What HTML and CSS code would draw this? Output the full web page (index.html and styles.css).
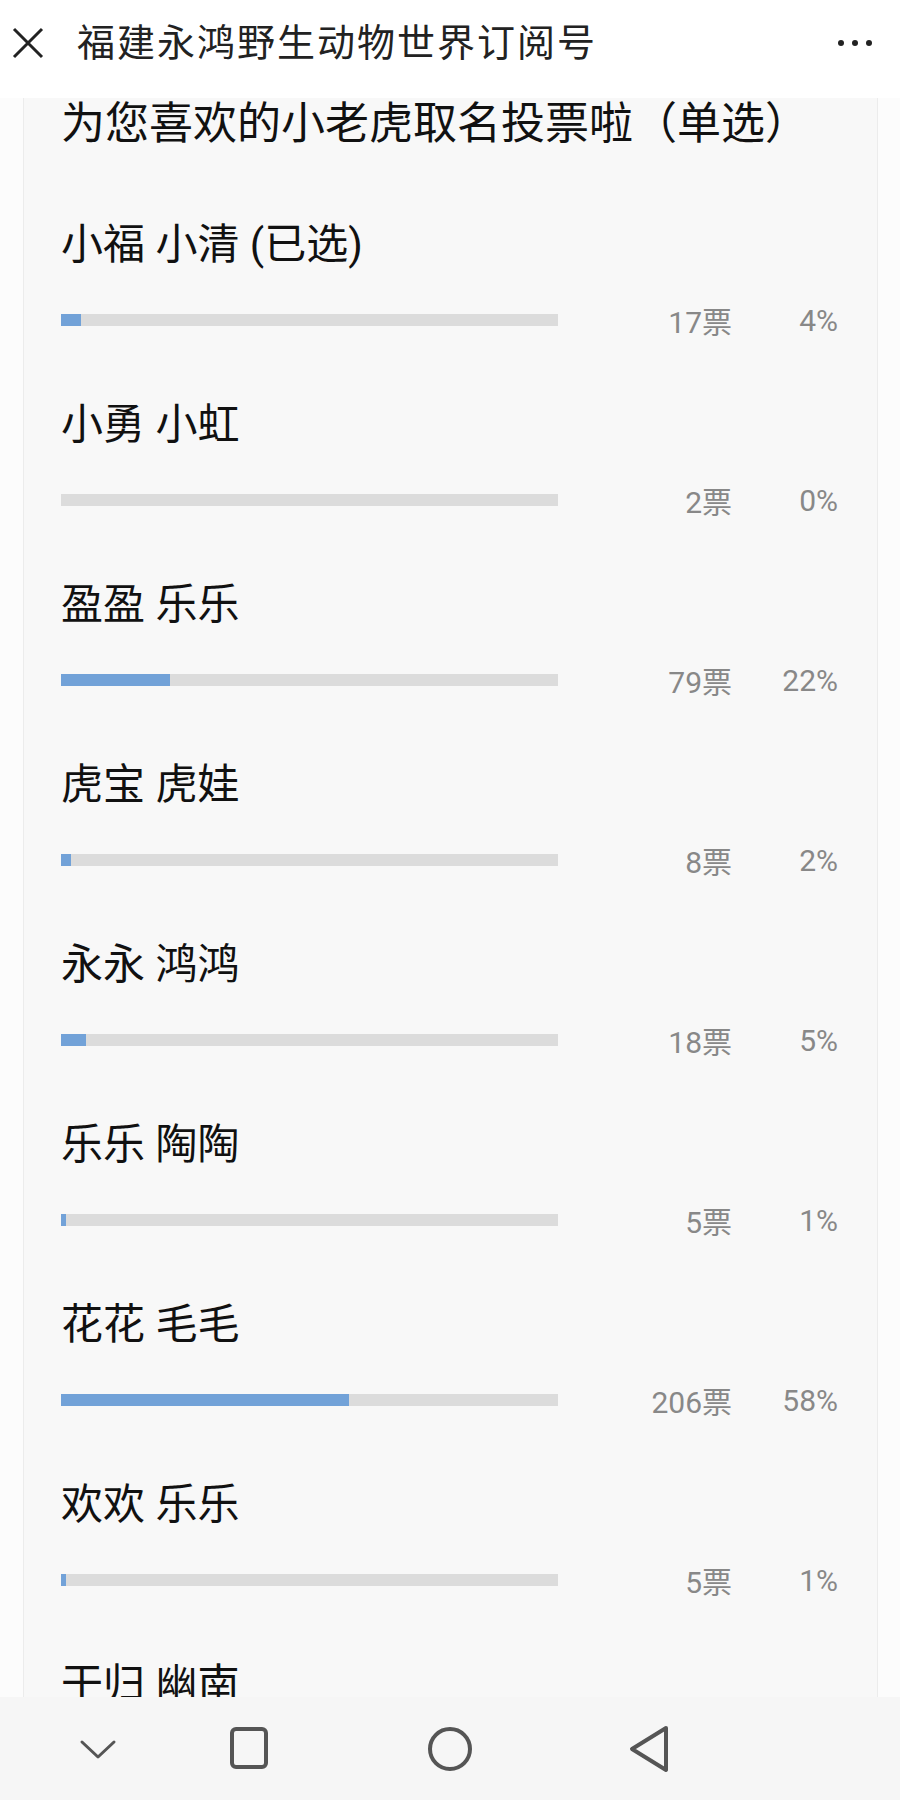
FILE: index.html
```html
<!DOCTYPE html>
<html lang="zh-CN">
<head>
    <meta charset="utf-8">
    <title>福建永鸿野生动物世界订阅号</title>
    <link rel="stylesheet" href="styles.css">
</head>
<body>
    <header class="topbar">
        <span class="close-btn">
            <svg width="32" height="32" viewBox="0 0 32 32"><path d="M2 2 L30 30 M30 2 L2 30" /></svg>
        </span>
        <h1 class="title">福建永鸿野生动物世界订阅号</h1>
        <span class="more-btn"><i></i><i></i><i></i></span>
    </header>

    <main class="vote-card">
        <h2 class="vote-title">为您喜欢的小老虎取名投票啦（单选）</h2>
        <ul class="options">
            <li class="option">
                <div class="option-name">小福 小清 (已选)</div>
                <div class="option-stat">
                    <div class="bar"><div class="bar-fill" style="width: 4%"></div></div>
                    <span class="count">17票</span>
                    <span class="percent">4%</span>
                </div>
            </li>
            <li class="option">
                <div class="option-name">小勇 小虹</div>
                <div class="option-stat">
                    <div class="bar"><div class="bar-fill" style="width: 0%"></div></div>
                    <span class="count">2票</span>
                    <span class="percent">0%</span>
                </div>
            </li>
            <li class="option">
                <div class="option-name">盈盈 乐乐</div>
                <div class="option-stat">
                    <div class="bar"><div class="bar-fill" style="width: 22%"></div></div>
                    <span class="count">79票</span>
                    <span class="percent">22%</span>
                </div>
            </li>
            <li class="option">
                <div class="option-name">虎宝 虎娃</div>
                <div class="option-stat">
                    <div class="bar"><div class="bar-fill" style="width: 2%"></div></div>
                    <span class="count">8票</span>
                    <span class="percent">2%</span>
                </div>
            </li>
            <li class="option">
                <div class="option-name">永永 鸿鸿</div>
                <div class="option-stat">
                    <div class="bar"><div class="bar-fill" style="width: 5%"></div></div>
                    <span class="count">18票</span>
                    <span class="percent">5%</span>
                </div>
            </li>
            <li class="option">
                <div class="option-name">乐乐 陶陶</div>
                <div class="option-stat">
                    <div class="bar"><div class="bar-fill" style="width: 1%"></div></div>
                    <span class="count">5票</span>
                    <span class="percent">1%</span>
                </div>
            </li>
            <li class="option">
                <div class="option-name">花花 毛毛</div>
                <div class="option-stat">
                    <div class="bar"><div class="bar-fill" style="width: 58%"></div></div>
                    <span class="count">206票</span>
                    <span class="percent">58%</span>
                </div>
            </li>
            <li class="option">
                <div class="option-name">欢欢 乐乐</div>
                <div class="option-stat">
                    <div class="bar"><div class="bar-fill" style="width: 1%"></div></div>
                    <span class="count">5票</span>
                    <span class="percent">1%</span>
                </div>
            </li>
            <li class="option">
                <div class="option-name">干归 幽南</div>
                <div class="option-stat">
                    <div class="bar"><div class="bar-fill" style="width: 4%"></div></div>
                    <span class="count">15票</span>
                    <span class="percent">4%</span>
                </div>
            </li>
        </ul>
    </main>

    <nav class="sysbar">
        <span class="sys-btn hide-btn">
            <svg width="40" height="24" viewBox="0 0 40 24"><path d="M4 5 L20 20 L36 5" /></svg>
        </span>
        <span class="sys-btn">
            <svg width="44" height="44" viewBox="0 0 44 44"><rect x="4" y="2" width="34" height="38" rx="4" /></svg>
        </span>
        <span class="sys-btn">
            <svg width="48" height="48" viewBox="0 0 48 48"><circle cx="24" cy="24" r="20" /></svg>
        </span>
        <span class="sys-btn">
            <svg width="44" height="48" viewBox="0 0 44 48"><path d="M38 3 L4 24 L38 45 Z" /></svg>
        </span>
    </nav>
</body>
</html>
```

FILE: styles.css
```css
* {
    margin: 0;
    padding: 0;
    box-sizing: border-box;
}
body {
    font-family: Roboto, "Noto Sans CJK SC", sans-serif;
    background: #fcfcfc;
    color: #111;
    overflow: hidden;
}
.topbar {
    display: flex;
    align-items: center;
    height: 98px;
    padding: 0 28px 12px 12px;
    background: #fff;
}
.close-btn {
    display: flex;
    width: 32px;
    height: 32px;
}
.close-btn svg path {
    stroke: #222;
    stroke-width: 3;
    fill: none;
}
.title {
    flex: 1;
    margin-left: 33px;
    font-size: 38px;
    font-weight: normal;
    letter-spacing: 2px;
    color: #222;
    line-height: 54px;
}
.more-btn {
    display: flex;
    gap: 8px;
}
.more-btn i {
    width: 6px;
    height: 6px;
    border-radius: 50%;
    background: #222;
}
.vote-card {
    margin-left: 23px;
    width: 855px;
    background: #f8f8f8;
    border-left: 1px solid #ececec;
    border-right: 1px solid #ececec;
    padding: 0 39px 0 37px;
}
.vote-title {
    font-size: 44px;
    font-weight: normal;
    line-height: 52px;
    color: #111;
}
.options {
    list-style: none;
    margin-top: 70px;
}
.option {
    padding-bottom: 65px;
}
.option-name {
    font-size: 42px;
    line-height: 50px;
    color: #111;
}
.option-stat {
    display: flex;
    align-items: center;
    height: 30px;
    margin-top: 35px;
    font-size: 30px;
    color: #888;
}
.bar {
    width: 497px;
    height: 12px;
    background: #dcdcdc;
}
.bar-fill {
    height: 100%;
    background: #72a2d8;
}
.count {
    width: 174px;
    text-align: right;
}
.percent {
    width: 106px;
    text-align: right;
}
.sysbar {
    position: fixed;
    left: 0;
    bottom: 0;
    width: 100%;
    height: 103px;
    display: flex;
    align-items: center;
    padding-left: 48px;
    gap: 100px;
    background: #f6f6f6;
}
.sys-btn {
    display: flex;
    justify-content: center;
    width: 100px;
}
.sys-btn.hide-btn {
    margin-right: -48px;
}
.sys-btn svg path,
.sys-btn svg rect,
.sys-btn svg circle {
    fill: none;
    stroke: #555;
    stroke-width: 4;
    stroke-linejoin: round;
    stroke-linecap: round;
}
.sys-btn.hide-btn svg path {
    stroke-width: 3;
}
```
